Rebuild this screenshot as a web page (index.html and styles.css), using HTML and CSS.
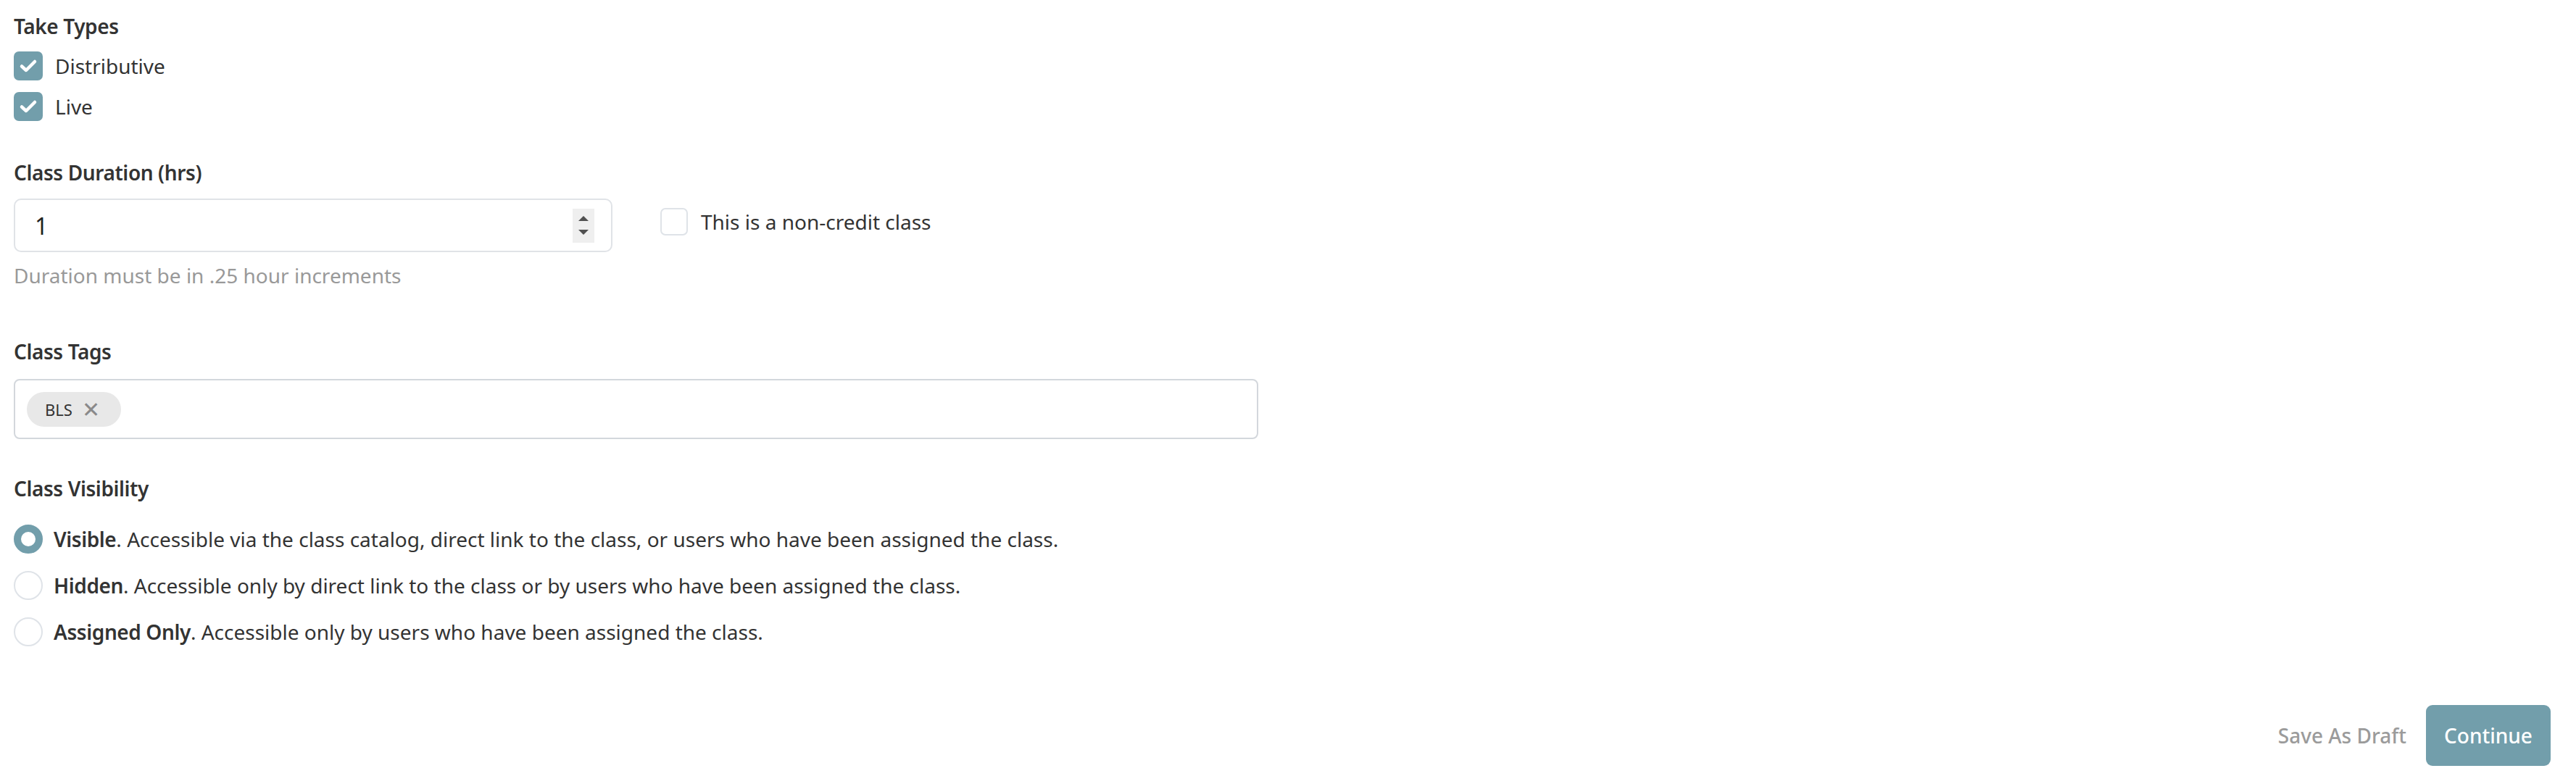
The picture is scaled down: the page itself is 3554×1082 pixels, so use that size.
FILE: index.html
```html
<!DOCTYPE html>
<html lang="en">
<head>
<meta charset="utf-8">
<title>Class Settings</title>
<link rel="stylesheet" href="styles.css">
</head>
<body>
<div class="form">
  <section class="field">
    <div class="label">Take Types</div>
    <div class="check-list">
      <label class="check-row">
        <span class="checkbox checked"><svg viewBox="0 0 40 40" width="40" height="40"><path d="M11 20.5 L17 26 L29 14" fill="none" stroke="#fff" stroke-width="4.5" stroke-linecap="round" stroke-linejoin="round"/></svg></span>
        <span class="check-text">Distributive</span>
      </label>
      <label class="check-row">
        <span class="checkbox checked"><svg viewBox="0 0 40 40" width="40" height="40"><path d="M11 20.5 L17 26 L29 14" fill="none" stroke="#fff" stroke-width="4.5" stroke-linecap="round" stroke-linejoin="round"/></svg></span>
        <span class="check-text">Live</span>
      </label>
    </div>
  </section>

  <section class="field duration">
    <div class="label">Class Duration (hrs)</div>
    <div class="duration-row">
      <div class="num-input">
        <span class="num-value">1</span>
        <span class="spinner">
          <span class="tri up"></span>
          <span class="tri down"></span>
        </span>
      </div>
      <label class="check-row noncredit">
        <span class="checkbox"></span>
        <span class="check-text">This is a non-credit class</span>
      </label>
    </div>
    <div class="hint">Duration must be in .25 hour increments</div>
  </section>

  <section class="field tags">
    <div class="label">Class Tags</div>
    <div class="tag-box">
      <span class="chip"><span class="chip-text">BLS</span><span class="chip-x">&#x2715;</span></span>
    </div>
  </section>

  <section class="field visibility">
    <div class="label">Class Visibility</div>
    <div class="radio-list">
      <label class="radio-row">
        <span class="radio checked"></span>
        <span class="radio-text"><b>Visible</b>. Accessible via the class catalog, direct link to the class, or users who have been assigned the class.</span>
      </label>
      <label class="radio-row">
        <span class="radio"></span>
        <span class="radio-text"><b>Hidden</b>. Accessible only by direct link to the class or by users who have been assigned the class.</span>
      </label>
      <label class="radio-row">
        <span class="radio"></span>
        <span class="radio-text"><b>Assigned Only</b>. Accessible only by users who have been assigned the class.</span>
      </label>
    </div>
  </section>

  <div class="actions">
    <span class="draft">Save As Draft</span>
    <span class="continue">Continue</span>
  </div>
</div>
</body>
</html>
```

FILE: styles.css
```css
html, body {
  margin: 0;
  padding: 0;
  background: #fff;
}

body {
  font-family: "Noto Sans", "Open Sans", sans-serif;
  font-size: 28px;
  line-height: 40px;
  color: #333;
}

.form {
  padding: 16px 35px 0 19px;
}

.label {
  font-weight: 600;
  letter-spacing: -0.4px;
  height: 40px;
}

.check-list {
  margin-top: 15px;
  display: flex;
  flex-direction: column;
  gap: 16px;
}

.check-row {
  display: flex;
  align-items: center;
  gap: 17px;
  height: 40px;
}

.checkbox {
  width: 40px;
  height: 40px;
  box-sizing: border-box;
  border: 2px solid #dfe3e8;
  border-radius: 7px;
  background: #fff;
  display: block;
  flex: none;
}

.checkbox.checked {
  border: none;
  background: #729eab;
}

.checkbox svg {
  display: block;
}

.duration {
  margin-top: 51px;
}

.duration-row {
  margin-top: 16px;
  display: flex;
  align-items: flex-start;
  gap: 66px;
}

.num-input {
  width: 826px;
  height: 74px;
  box-sizing: border-box;
  border: 2px solid #e0e3e7;
  border-radius: 10px;
  display: flex;
  align-items: center;
  justify-content: space-between;
  padding: 0 23px 0 27px;
  font-size: 32px;
  color: #222;
}

.num-value {
  line-height: 40px;
  padding-top: 2px;
}

.spinner {
  width: 30px;
  height: 47px;
  background: #efefef;
  display: flex;
  flex-direction: column;
  align-items: center;
  justify-content: center;
  gap: 12px;
}

.tri {
  width: 0;
  height: 0;
  border-left: 7px solid transparent;
  border-right: 7px solid transparent;
}

.tri.up {
  border-bottom: 7px solid #505050;
}

.tri.down {
  border-top: 7px solid #505050;
}

.noncredit {
  margin-top: 12px;
  gap: 18px;
}

.noncredit .checkbox {
  width: 38px;
  height: 38px;
}

.hint {
  margin-top: 12px;
  color: #999;
  font-size: 28px;
}

.tags {
  margin-top: 65px;
}

.tag-box {
  margin-top: 18px;
  width: 1717px;
  height: 83px;
  box-sizing: border-box;
  border: 2px solid #d3d7dc;
  border-radius: 8px;
  display: flex;
  align-items: center;
  padding-left: 16px;
}

.chip {
  height: 48px;
  border-radius: 24px;
  background: #e8e8e8;
  display: inline-flex;
  align-items: center;
  padding: 0 29px 0 25px;
  gap: 13px;
  font-size: 22px;
}

.chip-text {
  color: #333;
}

.chip-x {
  color: #8a8a8a;
  font-size: 30px;
}

.visibility {
  margin-top: 48px;
}

.radio-list {
  margin-top: 30px;
  display: flex;
  flex-direction: column;
  gap: 24px;
}

.radio-row {
  display: flex;
  align-items: center;
  gap: 15px;
  height: 40px;
}

.radio {
  width: 40px;
  height: 40px;
  box-sizing: border-box;
  border-radius: 50%;
  border: 2px solid #dfe3e8;
  background: #fff;
  flex: none;
}

.radio.checked {
  border: 10.5px solid #729eab;
}

.radio-text b {
  font-weight: 600;
  letter-spacing: -0.4px;
}

.actions {
  margin-top: 81px;
  display: flex;
  justify-content: flex-end;
  align-items: center;
  gap: 27px;
}

.draft {
  color: #9b9b9b;
  font-weight: 500;
}

.continue {
  height: 84px;
  width: 172px;
  box-sizing: border-box;
  background: #729eab;
  color: #fff;
  font-weight: 500;
  border-radius: 9px;
  display: flex;
  align-items: center;
  justify-content: center;
}
```
